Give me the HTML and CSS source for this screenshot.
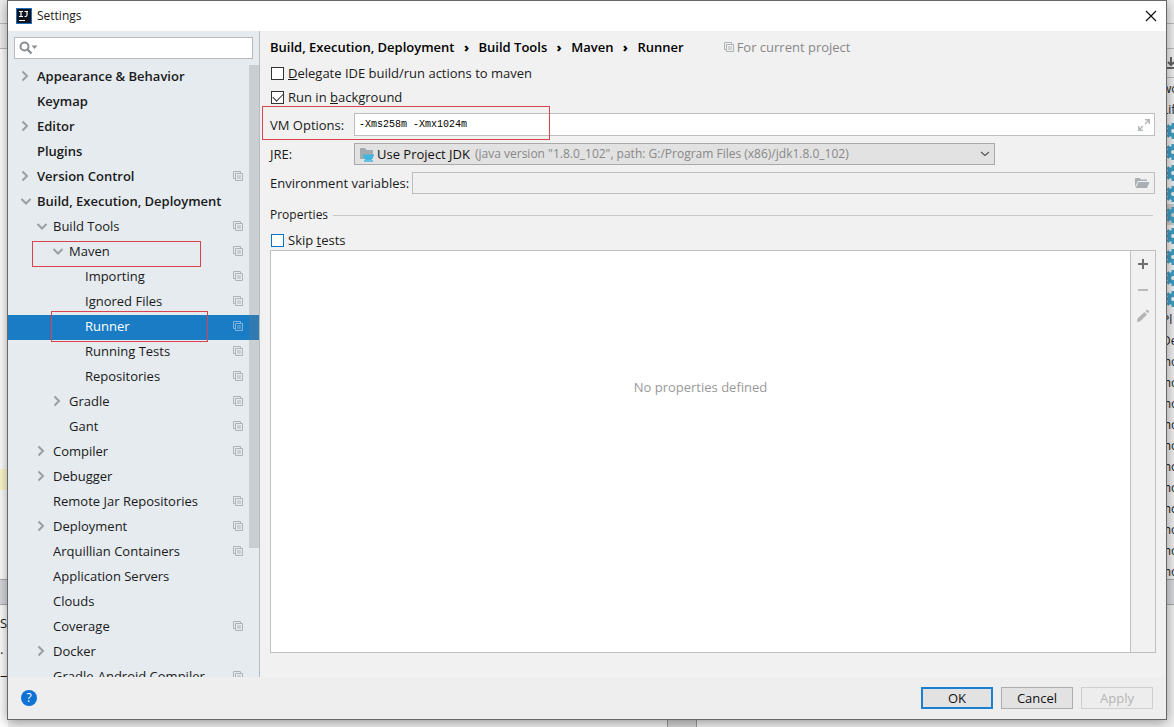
FILE: index.html
```html
<!DOCTYPE html>
<html lang="en">
<head>
<meta charset="utf-8">
<title>Settings</title>
<link rel="stylesheet" href="styles.css">
</head>
<body>
<svg class="defs" aria-hidden="true">
  <symbol id="right" viewBox="0 0 12 12"><path d="M2.500 1.500 7 6l-4.500 4.500" fill="none" stroke="#9a9fa2" stroke-width="2"/></symbol>
  <symbol id="down" viewBox="0 0 12 12"><path d="M1.500 4 6 8.500 10.500 4" fill="none" stroke="#9a9fa2" stroke-width="2"/></symbol>
  <symbol id="copy" viewBox="0 0 10 10"><path d="M2.500 7.500h-2v-7h7v2M2.500 2.500h7v7h-7zM4 5h4M4 7h4" fill="none" stroke="currentColor"/></symbol>
  <symbol id="gear" viewBox="0 0 16 16"><path fill="#3f9fc4" fill-rule="evenodd" d="M6.500 0h3v2.200l1.500.600L12.600 1.300l2.100 2.100L13.200 5l.6 1.500H16v3h-2.200l-.6 1.500 1.500 1.600-2.100 2.100-1.600-1.500-1.500.6V16h-3v-2.200L5 13.200l-1.600 1.500-2.100-2.100L2.800 11l-.6-1.500H0v-3h2.200L2.800 5 1.300 3.400l2.100-2.100L5 2.800l1.500-.6zM8 6a2 2 0 1 0 0 4 2 2 0 0 0 0-4z"/></symbol>
</svg>
<div class="desktop">
  <div class="edge-left" aria-hidden="true">
    <div class="toolbar-a"></div>
    <div class="toolbar-b"></div>
    <div class="editor"><div class="caret-line"></div></div>
    <div class="tool-header"></div>
    <div class="console"><span>S</span><span>.</span><span>—</span></div>
  </div>
  <div class="status" aria-hidden="true"><div class="status-cell"></div></div>
  <div class="edge-right" aria-hidden="true">
    <div class="toolbar-a"></div>
    <div class="toolbar-b"></div>
    <div class="tool-icons"><svg width="12" height="14" viewBox="0 0 12 14"><path d="M6 0v8M3 5l3 3 3-3M0 11h12" fill="none" stroke="#666" stroke-width="2"/></svg></div>
    <div class="goals">
      <span>wo</span><span>Lif</span>
      <span><svg><use href="#gear"/></svg></span><span><svg><use href="#gear"/></svg></span><span><svg><use href="#gear"/></svg></span><span><svg><use href="#gear"/></svg></span><span class="current"><svg><use href="#gear"/></svg></span><span><svg><use href="#gear"/></svg></span><span><svg><use href="#gear"/></svg></span><span><svg><use href="#gear"/></svg></span><span><svg><use href="#gear"/></svg></span>
      <span>Pl</span><span>De</span><span class="module">mo</span><span class="module">mo</span><span class="module">mo</span><span class="module">mo</span><span class="module">mo</span><span class="module">mo</span><span class="module">mo</span><span class="module">mo</span><span class="module">mo</span><span class="module">mo</span><span class="module">mo</span>
    </div>
    <div class="tool-header"></div>
  </div>

  <div class="dialog" role="dialog" aria-labelledby="dialog-title">
    <header class="titlebar">
      <svg width="16" height="16" viewBox="0 0 16 16" aria-hidden="true"><rect width="16" height="16" fill="#1d6fc0"/><rect x="1" y="1" width="14" height="14" fill="#10151f"/><path d="M3 3.500h4M5 3.500v5M3 8.500h4M8.500 3.500H12M11 3.500v3.500q0 1.500-1.500 1.500H8.500M3 12.500h6" fill="none" stroke="#fff" stroke-width="1.200"/></svg>
      <h1 id="dialog-title">Settings</h1>
      <button class="close" aria-label="Close"><svg width="12" height="12" viewBox="0 0 12 12"><path d="m1 1 10 10M11 1 1 11" stroke="#111" stroke-width="1.200"/></svg></button>
    </header>

    <div class="content">
      <aside class="sidebar">
        <label class="search">
          <svg width="20" height="14" viewBox="0 0 20 14" aria-hidden="true"><circle cx="5.500" cy="5.500" r="4" fill="none" stroke="#8b8f92" stroke-width="2"/><path d="m8.500 8.500 4 4" stroke="#8b8f92" stroke-width="2.400"/><path d="M12.500 4.500h6l-3 3.500z" fill="#8b8f92"/></svg>
          <input type="text" aria-label="Search settings">
        </label>
        <div class="tree-view">
          <ul class="tree">
            <li><button class="row top"><svg class="arrow"><use href="#right"/></svg><span>Appearance &amp; Behavior</span></button></li>
            <li><button class="row top"><i class="arrow"></i><span>Keymap</span></button></li>
            <li><button class="row top"><svg class="arrow"><use href="#right"/></svg><span>Editor</span></button></li>
            <li><button class="row top"><i class="arrow"></i><span>Plugins</span></button></li>
            <li><button class="row top"><svg class="arrow"><use href="#right"/></svg><span>Version Control</span><svg class="scope"><use href="#copy"/></svg></button></li>
            <li><button class="row top"><svg class="arrow"><use href="#down"/></svg><span>Build, Execution, Deployment</span></button></li>
            <li><button class="row l1"><svg class="arrow"><use href="#down"/></svg><span>Build Tools</span><svg class="scope"><use href="#copy"/></svg></button></li>
            <li><button class="row l2"><svg class="arrow"><use href="#down"/></svg><span>Maven</span><svg class="scope"><use href="#copy"/></svg></button><div class="mark mark-maven"></div></li>
            <li><button class="row l3"><i class="arrow"></i><span>Importing</span><svg class="scope"><use href="#copy"/></svg></button></li>
            <li><button class="row l3"><i class="arrow"></i><span>Ignored Files</span><svg class="scope"><use href="#copy"/></svg></button></li>
            <li><button class="row l3 selected"><i class="arrow"></i><span>Runner</span><svg class="scope"><use href="#copy"/></svg></button><div class="mark mark-runner"></div></li>
            <li><button class="row l3"><i class="arrow"></i><span>Running Tests</span><svg class="scope"><use href="#copy"/></svg></button></li>
            <li><button class="row l3"><i class="arrow"></i><span>Repositories</span><svg class="scope"><use href="#copy"/></svg></button></li>
            <li><button class="row l2"><svg class="arrow"><use href="#right"/></svg><span>Gradle</span><svg class="scope"><use href="#copy"/></svg></button></li>
            <li><button class="row l2"><i class="arrow"></i><span>Gant</span><svg class="scope"><use href="#copy"/></svg></button></li>
            <li><button class="row l1"><svg class="arrow"><use href="#right"/></svg><span>Compiler</span><svg class="scope"><use href="#copy"/></svg></button></li>
            <li><button class="row l1"><svg class="arrow"><use href="#right"/></svg><span>Debugger</span></button></li>
            <li><button class="row l1"><i class="arrow"></i><span>Remote Jar Repositories</span><svg class="scope"><use href="#copy"/></svg></button></li>
            <li><button class="row l1"><svg class="arrow"><use href="#right"/></svg><span>Deployment</span><svg class="scope"><use href="#copy"/></svg></button></li>
            <li><button class="row l1"><i class="arrow"></i><span>Arquillian Containers</span><svg class="scope"><use href="#copy"/></svg></button></li>
            <li><button class="row l1"><i class="arrow"></i><span>Application Servers</span></button></li>
            <li><button class="row l1"><i class="arrow"></i><span>Clouds</span></button></li>
            <li><button class="row l1"><i class="arrow"></i><span>Coverage</span><svg class="scope"><use href="#copy"/></svg></button></li>
            <li><button class="row l1"><svg class="arrow"><use href="#right"/></svg><span>Docker</span></button></li>
            <li><button class="row l1"><i class="arrow"></i><span>Gradle-Android Compiler</span><svg class="scope"><use href="#copy"/></svg></button></li>
          </ul>
          <div class="scrollbar"></div>
        </div>
      </aside>

      <main class="page">
        <nav class="crumbs" aria-label="Breadcrumb">
          <span>Build, Execution, Deployment</span><b>›</b><span>Build Tools</span><b>›</b><span>Maven</span><b>›</b><span>Runner</span>
          <small><svg class="scope"><use href="#copy"/></svg>For current project</small>
        </nav>
        <div class="checks">
          <label class="check"><input type="checkbox"><span><u>D</u>elegate IDE build/run actions to maven</span></label>
          <label class="check"><input type="checkbox" checked><span>Run in <u>b</u>ackground</span></label>
        </div>
        <div class="fields">
          <div class="field vm">
            <label for="vm">VM Options:</label>
            <div class="box"><input id="vm" class="mono" type="text" value="-Xms258m -Xmx1024m"><button class="icon" aria-label="Expand"><svg width="12" height="12" viewBox="0 0 12 12"><path d="M7 5l4-4M7 .8h4.200V5M5 7l-4 4M.8 7v4.200H5" fill="none" stroke="#b4b8ba" stroke-width="1.500"/></svg></button></div>
            <div class="mark mark-vm"></div>
          </div>
          <div class="field">
            <label for="jre">JRE:</label>
            <div class="box combo">
              <svg width="16" height="15" viewBox="0 0 16 15" aria-hidden="true"><path d="M1 1h5l1.500 2H14v9H1z" fill="#a3abb0"/><path d="M4 7.500h11v2h-1q-.500 2.500-2 3.500H7Q4 12 4 7.500z" fill="#40b6e0"/><path d="M5 14h9" stroke="#40b6e0" stroke-width="1.500"/></svg>
              <select id="jre"><option>Use Project JDK</option></select>
              <span class="hint">(java version "1.8.0_102", path: G:/Program Files (x86)/jdk1.8.0_102)</span>
              <svg class="drop" width="10" height="6" viewBox="0 0 10 6" aria-hidden="true"><path d="m1 1 4 3.500L9 1" fill="none" stroke="#555" stroke-width="1.200"/></svg>
            </div>
          </div>
          <div class="field env">
            <label for="env">Environment variables:</label>
            <div class="box disabled"><input id="env" type="text" readonly><button class="icon" aria-label="Browse"><svg width="16" height="12" viewBox="0 0 16 12"><path d="M1 10V1h4.500L7 2.500h6V4H4z" fill="#a9afb3"/><path d="M4.500 5H15.500L13 11H1.500z" fill="#a9afb3"/></svg></button></div>
          </div>
        </div>
        <h2 class="section">Properties</h2>
        <label class="check skip"><input type="checkbox"><span>Skip <u>t</u>ests</span></label>
        <div class="table">
          <div class="empty">No properties defined</div>
          <div class="tools">
            <button aria-label="Add"><svg width="12" height="12" viewBox="0 0 12 12"><path d="M6 1v10M1 6h10" stroke="#6e6e6e" stroke-width="2"/></svg></button>
            <button aria-label="Remove"><svg width="12" height="12" viewBox="0 0 12 12"><path d="M1 6h10" stroke="#bcbcbc" stroke-width="2"/></svg></button>
            <button aria-label="Edit"><svg width="14" height="14" viewBox="0 0 14 14"><path d="m1 13 .5-3.500L8.500 3 11 5.500 4 12.500zM9.500 2l1-1q1-.8 2 .2t.3 2L12 4.300z" fill="#b5b5b5"/></svg></button>
          </div>
        </div>
      </main>
    </div>

    <footer class="footer">
      <button class="help" aria-label="Help">?</button>
      <button class="btn primary">OK</button>
      <button class="btn">Cancel</button>
      <button class="btn" disabled>Apply</button>
    </footer>
  </div>
</div>
</body>
</html>
```
FILE: styles.css
```css
* { box-sizing: border-box; }
body {
  margin: 0;
  font: 13px/20px "Open Sans", "Noto Sans", sans-serif;
  color: #1a1a1a;
}
button, input, select { font: inherit; color: inherit; margin: 0; padding: 0; border: 0; background: none; border-radius: 0; }
h1, h2, ul { margin: 0; padding: 0; font: inherit; list-style: none; }
svg { display: block; flex: none; }
.defs { position: absolute; width: 0; height: 0; }

/* Windows behind the dialog */
.desktop {
  position: relative;
  height: 100vh;
  overflow: hidden;
  display: grid;
  grid-template-columns: 8px 1fr 9px;
  background: #f0f0f0;
}
.edge-left, .edge-right { display: flex; flex-direction: column; overflow: hidden; }
.toolbar-a { height: 24px; border-bottom: 1px solid #bbb; flex: none; }
.toolbar-b { height: 25px; border-bottom: 1px solid #bbb; flex: none; }
.editor { background: #fff; height: 530px; padding-top: 420px; flex: none; }
.caret-line { height: 21px; background: #fffcd0; }
.tool-header { height: 26px; background: #d8dadd; border: solid #aaa; border-width: 1px 0; flex: none; }
.console { flex: 1; background: #fff; display: grid; grid-auto-rows: 26px; padding-top: 5px; line-height: 26px; }
.status { align-self: end; display: flex; justify-content: center; }
.status-cell { width: 30px; height: 10px; background: #d5d5d5; border: solid #999; border-width: 0 1px; margin-left: 190px; }
.tool-icons { height: 29px; border-bottom: 1px solid #bbb; padding-top: 8px; flex: none; }
.goals { display: grid; grid-auto-rows: 21px; height: 501px; font-size: 12px; line-height: 21px; flex: none; }
.goals span { white-space: nowrap; text-indent: -3px; }
.goals .module { text-indent: -5px; }
.goals svg { width: 16px; height: 16px; margin-top: 3px; }
.goals .current { background: #ccc; }

/* Dialog */
.dialog {
  position: absolute;
  inset: 0 7px 7px 7px;
  display: flex;
  flex-direction: column;
  background: #f1f1f1;
  border: 1px solid #686868;
  box-shadow: 0 2px 12px rgba(0, 0, 0, .4);
}
.titlebar { display: flex; align-items: center; gap: 5px; height: 30px; padding: 0 9px 0 8px; background: #fff; flex: none; font-size: 12px; }
.close { margin-left: auto; }
.content { flex: 1; min-height: 0; display: flex; }

.sidebar { width: 252px; flex: none; display: flex; flex-direction: column; background: #e5ebef; border-right: 1px solid #b8bcbf; padding-top: 6px; }
.search { display: flex; align-items: center; margin: 0 6px; height: 22px; border: 1px solid #b7b9ba; background: #fff; padding-left: 4px; flex: none; }
.search input { flex: 1; min-width: 0; outline: 0; }
.tree-view { position: relative; flex: 1; min-height: 0; overflow: hidden; margin-top: 6px; }
.tree li { position: relative; }
.row { display: flex; align-items: center; width: 100%; height: 25px; padding: 0 16px 3px 12px; text-align: left; white-space: nowrap; }
.row.top { font-weight: 600; }
.row.l1 { padding-left: 28px; }
.row.l2 { padding-left: 44px; }
.row.l3 { padding-left: 60px; }
.arrow { width: 12px; height: 12px; margin-right: 5px; flex: none; }
.scope { width: 10px; height: 10px; color: #aeb3b6; }
.row .scope { margin-left: auto; }
.row.selected { background: #1a7cc4; color: #fff; }
.row.selected .scope { color: #7fb5de; }
.scrollbar { position: absolute; top: 0; right: 0; width: 10px; height: 79%; background: rgba(120, 120, 125, .25); }

/* Red annotation frames */
.mark { position: absolute; border: 1px solid #d9434e; pointer-events: none; z-index: 1; }
.mark-maven { left: 24px; top: 1px; width: 169px; height: 26px; }
.mark-runner { left: 43px; top: -4px; width: 157px; height: 31px; }
.mark-vm { left: -8px; top: -7px; width: 288px; height: 34px; }

.page { flex: 1; min-width: 0; display: flex; flex-direction: column; padding: 6px 10px 24px; }
.crumbs { display: flex; align-items: center; height: 20px; font-weight: 600; color: #000; white-space: nowrap; }
.crumbs b { width: 24px; text-align: center; }
.crumbs small { display: flex; align-items: center; gap: 3px; margin-left: 40px; font-size: 13px; font-weight: 400; color: #888; }
.checks { margin-top: 4px; }
.check { display: flex; align-items: center; gap: 4px; height: 24px; padding-left: 1px; }
.check input { appearance: none; width: 13px; height: 13px; border: 1px solid #333; background: #fff; display: grid; place-items: center; }
.check input:checked::after { content: ""; width: 9px; height: 5px; border: solid #333; border-width: 0 0 1px 1px; transform: translateY(-1px) rotate(-45deg); }
.check.skip { height: 20px; margin-top: 5px; flex: none; }
.skip input { border-color: #0b74c8; }
.fields { display: grid; gap: 7px; margin: 4px 1px 0 0; }
.field { position: relative; display: grid; grid-template-columns: 84px 1fr; align-items: center; height: 22px; }
.field.vm { height: 23px; }
.field.env { grid-template-columns: 142px 1fr; }
.box { display: flex; align-items: center; height: 100%; min-width: 0; border: 1px solid #bcbfc0; background: #fff; padding: 0 4px; }
.box input { flex: 1; min-width: 0; height: 100%; outline: 0; }
.box .mono { font: 10px/20px "Liberation Mono", monospace; color: #000; }
.box.disabled { background: #f0f0f0; }
.combo { width: 80%; background: #e2e2e2; border-color: #a9a9a9; white-space: nowrap; }
.combo select { appearance: none; margin: 0 4px 0 2px; color: #111; outline: 0; }
.hint { color: #888; font-size: 12px; }
.drop { margin-left: auto; }
.section { display: flex; align-items: center; gap: 5px; height: 20px; margin: 11px 3px 0 0; font-size: 12px; }
.section::after { content: ""; flex: 1; height: 1px; background: #c8c8c8; }
.table { flex: 1; min-height: 0; display: flex; background: #fff; border: 1px solid #bdbfc0; }
.empty { flex: 1; padding-top: 126px; text-align: center; color: #999; }
.tools { width: 25px; border-left: 1px solid #bdbfc0; background: #f1f1f1; }
.tools button { display: grid; place-items: center; width: 100%; height: 26px; }

.footer { display: flex; align-items: center; gap: 8px; height: 42px; padding: 0 13px; background: #eee; flex: none; }
.help { width: 16px; height: 16px; border-radius: 50%; background: #0e71d3; color: #fff; font-size: 12px; line-height: 16px; margin-right: auto; }
.btn { width: 72px; height: 22px; line-height: 18px; border: 1px solid #adadad; background: #e2e2e2; color: #111; }
.btn.primary { border: 2px solid #1a80cf; }
.btn:disabled { color: #b5b5b5; background: #ededed; border-color: #cfcfcf; }
```
